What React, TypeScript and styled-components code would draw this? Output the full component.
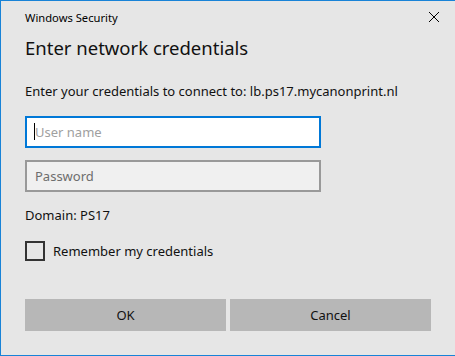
import React from 'react'
import styled, { createGlobalStyle } from 'styled-components';

const Global = createGlobalStyle`
    html, body{
        margin: 0;
        padding: 0;
        background: #e6e6e6;
    }

    *{
        box-sizing: border-box;
    }
`

const Window = styled.div`
    width: 455px;
    height: 356px;
    background: #e6e6e6;
    border: 1px solid #1883d7;
    border-right: none;
    padding-left: 24px;
    display: flex;
    flex-direction: column;
    font-family: "Noto Sans", "Open Sans", sans-serif;
    color: #000;
`

const TitleBar = styled.div`
    height: 32px;
    display: flex;
    align-items: center;
    justify-content: space-between;
    padding-right: 16px;
    font-size: 11.2px;
`

const CloseButton = styled.button`
    width: 10px;
    height: 10px;
    padding: 0;
    border: none;
    background: none;
    display: block;

    svg{
        display: block;
    }
`

const Heading = styled.h1`
    margin: 1px 0 0;
    font-size: 18.5px;
    font-weight: 400;
    line-height: 28px;
    color: #111;
`

const Message = styled.p`
    margin: 19px 0 0;
    font-size: 13px;
    line-height: 20px;
    color: #111;
`

const Field = styled.div<{ $active?: boolean }>`
    position: relative;
    width: 296px;
    height: 32px;
    margin-top: ${p => p.$active ? '15px' : '12px'};

    input{
        width: 100%;
        height: 100%;
        border: 2px solid ${p => p.$active ? '#0078d7' : '#999999'};
        background: ${p => p.$active ? '#ffffff' : '#f0f0f0'};
        padding: 0 8px;
        font-family: inherit;
        font-size: 13px;
        outline: none;
    }

    input::placeholder{
        color: ${p => p.$active ? '#a0a0a0' : '#6d6d6d'};
    }
`

const Caret = styled.span`
    position: absolute;
    left: 9px;
    top: 7px;
    width: 1px;
    height: 17px;
    background: #000;
`

const Domain = styled.div`
    margin-top: 13px;
    font-size: 13px;
    line-height: 20px;
    color: #111;
`

const CheckRow = styled.label`
    margin-top: 16px;
    display: flex;
    align-items: center;
    gap: 8px;
    font-size: 13px;
    color: #111;
`

const Box = styled.span`
    width: 20px;
    height: 20px;
    border: 2px solid #333333;
    display: block;
`

const Buttons = styled.div`
    margin-top: 38px;
    display: grid;
    grid-template-columns: 201px 201px;
    gap: 4px;
`

const Button = styled.button`
    height: 32px;
    border: none;
    background: #b7b7b7;
    font-family: inherit;
    font-size: 13px;
    color: #111;
    padding: 0;
`

export default function App() {
    return (
        <>
            <Global />
            <Window>
                <TitleBar>
                    <span>Windows Security</span>
                    <CloseButton aria-label="Close">
                        <svg width="10" height="10" viewBox="0 0 10 10">
                            <path d="M0 0 L10 10 M10 0 L0 10" stroke="#000" strokeWidth="1" />
                        </svg>
                    </CloseButton>
                </TitleBar>

                <Heading>Enter network credentials</Heading>

                <Message>Enter your credentials to connect to: lb.ps17.mycanonprint.nl</Message>

                <Field $active>
                    <input type="text" placeholder="User name" />
                    <Caret />
                </Field>

                <Field>
                    <input type="password" placeholder="Password" />
                </Field>

                <Domain>Domain: PS17</Domain>

                <CheckRow>
                    <Box />
                    <span>Remember my credentials</span>
                </CheckRow>

                <Buttons>
                    <Button>OK</Button>
                    <Button>Cancel</Button>
                </Buttons>
            </Window>
        </>
    )
}
